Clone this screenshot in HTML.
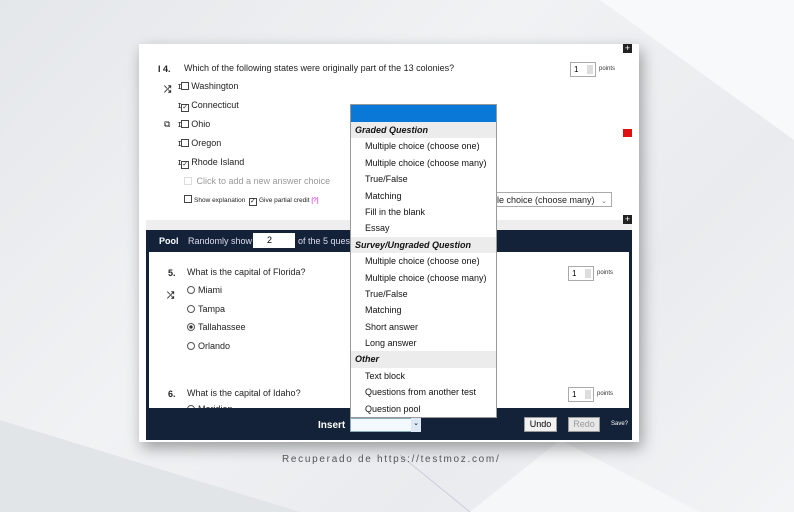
<!DOCTYPE html>
<html><head><meta charset="utf-8"><style>
*{margin:0;padding:0;box-sizing:border-box}
body{width:794px;height:512px;overflow:hidden;font-family:"Liberation Sans",sans-serif;position:relative;background:linear-gradient(135deg,#e4e7ea 0%,#f1f2f4 40%,#e9ebee 70%,#f3f4f6 100%)}
.a{position:absolute;white-space:nowrap}
.f{font-size:9px;color:#222}
.cb{display:inline-block;width:8px;height:8px;border:1px solid #444;vertical-align:-1px;margin-right:2px;font-size:7px;line-height:6px;text-align:center}
.rb{display:inline-block;width:8px;height:8px;border:1px solid #555;border-radius:50%;vertical-align:-1px;margin-right:3px}
.dd div{height:16.4px;line-height:16.4px;font-size:9px;color:#111;padding-left:14px}
.dd .h{font-weight:bold;font-style:italic;background:#ececec;padding-left:4px}
.pt{position:absolute;width:26px;height:15px;border:1px solid #aaa;background:#fff;font-size:8px;padding:2px 3px}
.pt:after{content:"";position:absolute;right:2px;top:2px;width:6px;height:9px;background:#ddd}
</style></head><body>
<svg class="a" style="left:0;top:0" width="794" height="512"><polygon points="600,0 794,0 794,140" fill="#f8f9fa"/><polygon points="0,420 300,512 0,512" fill="#e2e5e8"/><polygon points="470,512 560,440 700,512" fill="#f6f7f8"/><line x1="400" y1="455" x2="470" y2="512" stroke="#ccd" stroke-width="1"/></svg>
<div class="a" style="left:139px;top:44px;width:500px;height:398px;background:#fff;box-shadow:3px 6px 14px rgba(0,0,0,.35)"></div>
<div class="a" style="left:146px;top:220px;width:486px;height:10px;background:#eee"></div>
<div class="a" style="left:623px;top:44px;width:9px;height:9px;background:#222;color:#fff;font-size:9px;line-height:8px;text-align:center">+</div>
<div class="a" style="left:623px;top:215px;width:9px;height:9px;background:#222;color:#fff;font-size:9px;line-height:8px;text-align:center">+</div>
<div class="a" style="left:623px;top:129px;width:9px;height:8px;background:#e01010"></div>
<div class="a f" style="left:158px;top:64px;font-weight:bold">I 4.</div>
<div class="a f" style="left:184px;top:63px">Which of the following states were originally part of the 13 colonies?</div>
<div class="pt" style="left:570px;top:62px">1</div><div class="a" style="left:599px;top:66px;font-size:6px;color:#333">points</div>
<div class="a f" style="left:164px;top:84px;font-weight:bold">⤮</div>
<div class="a f" style="left:164px;top:119px">⧉</div>
<div class="a f" style="left:178px;top:81px">ɪ<span class="cb"></span>Washington</div>
<div class="a f" style="left:178px;top:100px">ɪ<span class="cb">✓</span>Connecticut</div>
<div class="a f" style="left:178px;top:119px">ɪ<span class="cb"></span>Ohio</div>
<div class="a f" style="left:178px;top:138px">ɪ<span class="cb"></span>Oregon</div>
<div class="a f" style="left:178px;top:157px">ɪ<span class="cb">✓</span>Rhode Island</div>
<div class="a f" style="left:184px;top:176px;color:#999"><span class="cb" style="border-color:#ddd"></span> Click to add a new answer choice</div>
<div class="a" style="left:184px;top:195px;font-size:6.5px;color:#222"><span class="cb"></span>Show explanation &nbsp;<span class="cb">✓</span>Give partial credit <span style="color:#c0c">[?]</span></div>
<div class="a" style="left:480px;top:192px;width:132px;height:15px;border:1px solid #aaa;font-size:9px;padding:2px 0 0 16px;color:#222">le choice (choose many) <span style="font-size:7px;color:#777;margin-left:4px">⌄</span></div>
<div class="a" style="left:146px;top:230px;width:486px;height:210px;background:#132238"></div>
<div class="a" style="left:149px;top:252px;width:480px;height:156px;background:#fff;overflow:hidden"><div class="a f" style="left:38px;top:152px"><span class="rb"></span>Meridian</div></div>
<div class="a" style="left:159px;top:236px;font-size:9px;color:#fff;font-weight:bold">Pool</div>
<div class="a" style="left:188px;top:236px;font-size:9px;color:#dde">Randomly show</div>
<div class="a" style="left:253px;top:233px;width:42px;height:15px;background:#fff;font-size:9px;padding:2px 0 0 14px">2</div>
<div class="a" style="left:298px;top:236px;font-size:9px;color:#dde">of the 5 quest</div>
<div class="a f" style="left:168px;top:268px;font-weight:bold">5.</div>
<div class="a f" style="left:187px;top:267px">What is the capital of Florida?</div>
<div class="pt" style="left:568px;top:266px">1</div><div class="a" style="left:597px;top:270px;font-size:6px;color:#333">points</div>
<div class="a f" style="left:167px;top:290px;font-weight:bold">⤮</div>
<div class="a f" style="left:187px;top:285px"><span class="rb"></span>Miami</div>
<div class="a f" style="left:187px;top:304px"><span class="rb"></span>Tampa</div>
<div class="a f" style="left:187px;top:322px"><span class="rb" style="background:radial-gradient(#333 35%,#fff 45%)"></span>Tallahassee</div>
<div class="a f" style="left:187px;top:341px"><span class="rb"></span>Orlando</div>
<div class="a f" style="left:168px;top:389px;font-weight:bold">6.</div>
<div class="a f" style="left:187px;top:388px">What is the capital of Idaho?</div>
<div class="pt" style="left:568px;top:387px">1</div><div class="a" style="left:597px;top:391px;font-size:6px;color:#333">points</div>
<div class="a" style="left:318px;top:420px;font-size:10px;color:#fff;font-weight:bold">Insert</div>
<div class="a" style="left:350px;top:418px;width:71px;height:14px;background:#f4f8ff;border:1px solid #8ab"></div>
<div class="a" style="left:411px;top:418px;width:10px;height:14px;background:#dde8f6;font-size:7px;text-align:center;line-height:12px">⌄</div>
<div class="a" style="left:524px;top:417px;width:33px;height:15px;background:#f2f2f2;border:1px solid #999;font-size:9px;text-align:center;line-height:13px">Undo</div>
<div class="a" style="left:568px;top:417px;width:32px;height:15px;background:#e8e8e8;border:1px solid #999;font-size:9px;text-align:center;line-height:13px;color:#999">Redo</div>
<div class="a" style="left:611px;top:421px;font-size:6px;color:#fff">Save?</div>
<div class="a dd" style="left:350px;top:104px;width:147px;height:314px;background:#fff;border:1px solid #999">
<div style="background:#0a78d7;height:17px"></div>
<div class="h">Graded Question</div><div>Multiple choice (choose one)</div><div>Multiple choice (choose many)</div><div>True/False</div><div>Matching</div><div>Fill in the blank</div><div>Essay</div>
<div class="h">Survey/Ungraded Question</div><div>Multiple choice (choose one)</div><div>Multiple choice (choose many)</div><div>True/False</div><div>Matching</div><div>Short answer</div><div>Long answer</div>
<div class="h">Other</div><div>Text block</div><div>Questions from another test</div><div>Question pool</div></div>
<div class="a" style="left:282px;top:454px;font-size:10px;letter-spacing:1.7px;color:#555">Recuperado de https://testmoz.com/</div>
</body></html>
